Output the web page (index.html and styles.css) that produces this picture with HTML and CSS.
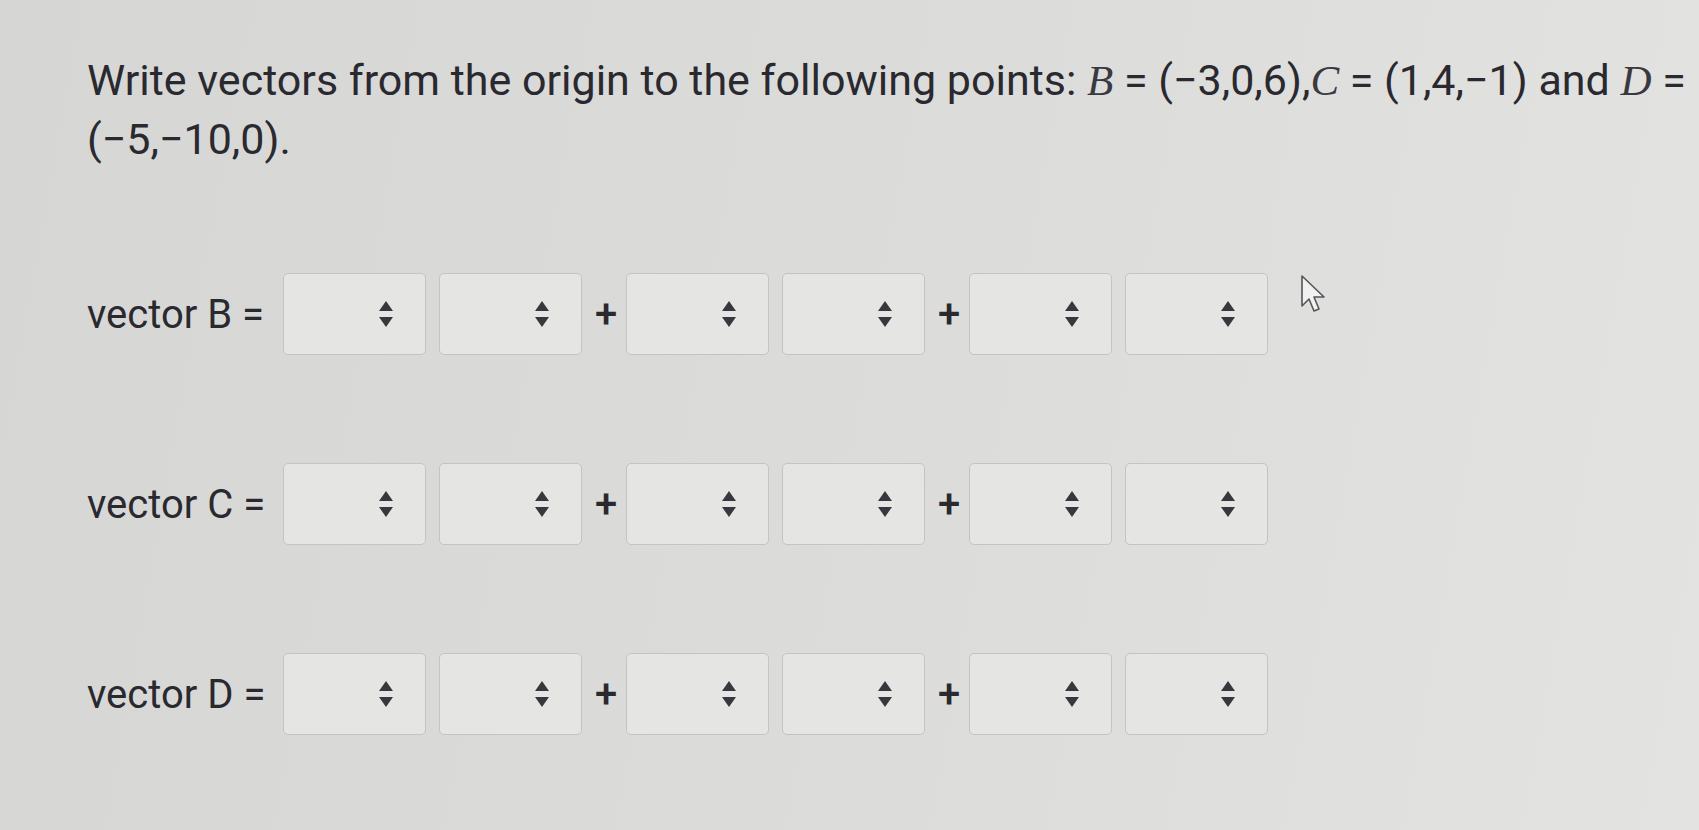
FILE: index.html
```html
<!DOCTYPE html>
<html lang="en">
<head>
  <meta charset="UTF-8">
  <meta name="viewport" content="width=device-width, initial-scale=1.0">
  <title>Vectors from the origin</title>
  <link rel="stylesheet" href="styles.css">
</head>
<body>
  <div class="question">

    <!-- Question text -->
    <p class="prompt">
      Write vectors from the origin to the following points:
      <span class="nowrap"><i class="mvar">B</i> = (−3,0,6),<i class="mvar">C</i> = (1,4,−1)</span> and
      <span class="nowrap"><i class="mvar">D</i> =</span>
      <span class="nowrap">(−5,−10,0).</span>
    </p>

    <!-- Answer rows -->
    <div class="answer-row">
      <span class="row-label">vector B =</span>
      <div class="pick"><svg class="spin" viewBox="0 0 14 26"><path d="M7 0 L14 10 H0 Z M0 16 H14 L7 26 Z"/></svg></div>
      <div class="pick"><svg class="spin" viewBox="0 0 14 26"><path d="M7 0 L14 10 H0 Z M0 16 H14 L7 26 Z"/></svg></div>
      <span class="plus">+</span>
      <div class="pick"><svg class="spin" viewBox="0 0 14 26"><path d="M7 0 L14 10 H0 Z M0 16 H14 L7 26 Z"/></svg></div>
      <div class="pick"><svg class="spin" viewBox="0 0 14 26"><path d="M7 0 L14 10 H0 Z M0 16 H14 L7 26 Z"/></svg></div>
      <span class="plus">+</span>
      <div class="pick"><svg class="spin" viewBox="0 0 14 26"><path d="M7 0 L14 10 H0 Z M0 16 H14 L7 26 Z"/></svg></div>
      <div class="pick"><svg class="spin" viewBox="0 0 14 26"><path d="M7 0 L14 10 H0 Z M0 16 H14 L7 26 Z"/></svg></div>
    </div>

    <div class="answer-row">
      <span class="row-label">vector C =</span>
      <div class="pick"><svg class="spin" viewBox="0 0 14 26"><path d="M7 0 L14 10 H0 Z M0 16 H14 L7 26 Z"/></svg></div>
      <div class="pick"><svg class="spin" viewBox="0 0 14 26"><path d="M7 0 L14 10 H0 Z M0 16 H14 L7 26 Z"/></svg></div>
      <span class="plus">+</span>
      <div class="pick"><svg class="spin" viewBox="0 0 14 26"><path d="M7 0 L14 10 H0 Z M0 16 H14 L7 26 Z"/></svg></div>
      <div class="pick"><svg class="spin" viewBox="0 0 14 26"><path d="M7 0 L14 10 H0 Z M0 16 H14 L7 26 Z"/></svg></div>
      <span class="plus">+</span>
      <div class="pick"><svg class="spin" viewBox="0 0 14 26"><path d="M7 0 L14 10 H0 Z M0 16 H14 L7 26 Z"/></svg></div>
      <div class="pick"><svg class="spin" viewBox="0 0 14 26"><path d="M7 0 L14 10 H0 Z M0 16 H14 L7 26 Z"/></svg></div>
    </div>

    <div class="answer-row">
      <span class="row-label">vector D =</span>
      <div class="pick"><svg class="spin" viewBox="0 0 14 26"><path d="M7 0 L14 10 H0 Z M0 16 H14 L7 26 Z"/></svg></div>
      <div class="pick"><svg class="spin" viewBox="0 0 14 26"><path d="M7 0 L14 10 H0 Z M0 16 H14 L7 26 Z"/></svg></div>
      <span class="plus">+</span>
      <div class="pick"><svg class="spin" viewBox="0 0 14 26"><path d="M7 0 L14 10 H0 Z M0 16 H14 L7 26 Z"/></svg></div>
      <div class="pick"><svg class="spin" viewBox="0 0 14 26"><path d="M7 0 L14 10 H0 Z M0 16 H14 L7 26 Z"/></svg></div>
      <span class="plus">+</span>
      <div class="pick"><svg class="spin" viewBox="0 0 14 26"><path d="M7 0 L14 10 H0 Z M0 16 H14 L7 26 Z"/></svg></div>
      <div class="pick"><svg class="spin" viewBox="0 0 14 26"><path d="M7 0 L14 10 H0 Z M0 16 H14 L7 26 Z"/></svg></div>
    </div>
  </div>

  <!-- Mouse pointer -->
  <svg class="pointer" viewBox="0 0 28 40"><path d="M2 2 L2 32 L9 25 L14 37 L19 35 L14 23 L24 23 Z"/></svg>
</body>
</html>
```

FILE: styles.css
```css
/* Reset default styles */
* {
  margin: 0;
  padding: 0;
  box-sizing: border-box;
}

body {
  background: linear-gradient(100deg, #d6d7d5 0%, #dcdddb 55%, #e3e3e1 100%);
  font-family: Roboto, "Liberation Sans", sans-serif;
  color: #2a2930;
  min-height: 100vh;
  overflow: hidden;
}

.question {
  padding: 51px 0 0 87px;
  display: flex;
  flex-direction: column;
}

/* Question text */
.prompt {
  font-size: 43px;
  line-height: 58px;
  margin-bottom: 105px;
}

.nowrap {
  white-space: nowrap;
}

.mvar {
  font-family: "Liberation Serif", "DejaVu Serif", serif;
  font-style: italic;
  color: #3a3940;
}

/* Answer rows */
.answer-row {
  display: flex;
  align-items: center;
  gap: 13px;
  margin-bottom: 108px;
}

.row-label {
  font-size: 40px;
  width: 183px;
  white-space: nowrap;
}

.plus {
  font-size: 40px;
  font-weight: 500;
  width: 18px;
  text-align: center;
}

.pick {
  width: 143px;
  height: 82px;
  background: #e5e5e3;
  border: 1.5px solid #c4c4c2;
  border-radius: 5px;
  display: flex;
  align-items: center;
  justify-content: flex-end;
  padding-right: 32px;
}

.spin {
  width: 14px;
  height: 26px;
  fill: #38373d;
}

/* Pointer overlay */
.pointer {
  position: absolute;
  left: 1300px;
  top: 274px;
  width: 28px;
  height: 40px;
  fill: #f1f1f0;
  stroke: #56555a;
  stroke-width: 1.6;
  stroke-linejoin: round;
}
```
